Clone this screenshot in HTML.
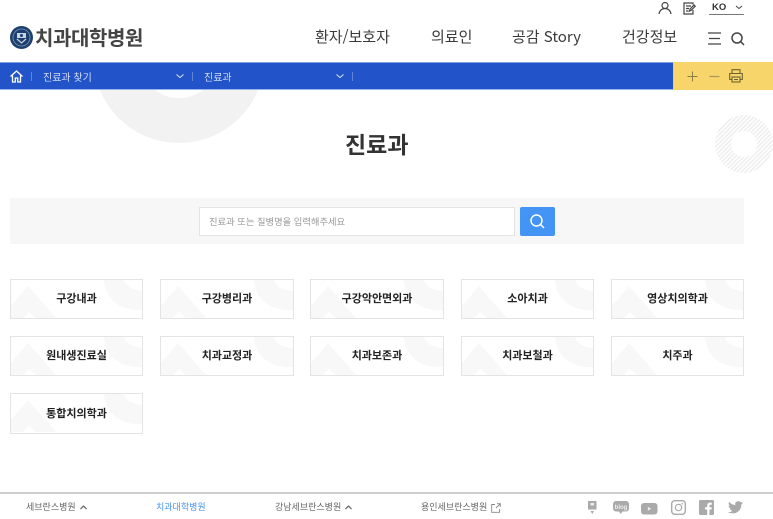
<!DOCTYPE html>
<html lang="ko"><head><meta charset="utf-8"><title>진료과</title>
<style>
*{margin:0;padding:0;box-sizing:border-box}
html,body{width:773px;height:519px;overflow:hidden;background:#fff}
body{position:relative;font-family:"Noto Sans CJK KR","Liberation Sans",sans-serif;color:#333}
.a{position:absolute;white-space:nowrap;line-height:1}
svg{position:absolute;overflow:visible}
.nav{font-size:15px;color:#3a3a3a;top:29px}
.card{position:absolute;width:133px;height:40px;border:1px solid #e4e4e4;background:#fff;overflow:hidden;text-align:center;line-height:37px;font-size:11px;font-weight:bold;color:#222}
.card svg{left:0;top:0}
.card span{position:relative}
.ft{font-size:9px;color:#666;top:502px}
</style></head><body>

<!-- background shapes -->
<svg style="left:0;top:90px;overflow:hidden" width="773" height="60">
<path fill-rule="evenodd" fill="#f2f2f2" d="M93.500 -32.500a85.500 85.500 0 1 0 171 0a85.500 85.500 0 1 0-171 0zM138.500 -32.500a40.500 40.500 0 1 1 81 0a40.500 40.500 0 1 1-81 0z"/>
</svg>
<svg style="left:0;top:0" width="773" height="519"><defs><pattern id="st" width="3" height="3" patternUnits="userSpaceOnUse" patternTransform="rotate(-45)"><rect width="3" height="1.500" fill="#eeeeee"/></pattern></defs>
<path fill-rule="evenodd" fill="url(#st)" d="M715 144a29 29 0 1 0 58 0a29 29 0 1 0-58 0zM731 144a13 13 0 1 1 26 0a13 13 0 1 1-26 0z"/>
</svg>

<!-- top utility -->
<svg style="left:658px;top:1px" width="14" height="14" fill="none" stroke="#444" stroke-width="1.200"><circle cx="7" cy="4.500" r="3"/><path d="M1 13c.5-3.500 3-5.500 6-5.500s5.500 2 6 5.500"/></svg>
<svg style="left:683px;top:2px" width="13" height="13" fill="none" stroke="#444" stroke-width="1.200"><path d="M10 8v4H1V1h9v1.500M3 4h5M3 6.500h3M3 9h2.500M6.500 9l.5-2 4-4 1.200 1.200-4 4z"/></svg>
<div class="a" style="left:712px;top:3px;font-size:9.500px;font-weight:bold;color:#333;font-family:'Liberation Sans',sans-serif">KO</div>
<svg style="left:735px;top:5px" width="8" height="5" fill="none" stroke="#444" stroke-width="1"><path d="M1 1l3 2.500L7 1"/></svg>
<div class="a" style="left:709px;top:14px;width:35px;height:1px;background:#777"></div>

<!-- logo -->
<svg style="left:10px;top:26px" width="24" height="24"><circle cx="11.500" cy="11.500" r="11.500" fill="#1d3f6e"/><circle cx="11.500" cy="11.500" r="8.500" fill="none" stroke="#7f97b8" stroke-width=".8"/><rect x="7" y="7" width="9" height="5" fill="#c9d4e3"/><path d="M7 13l4.500 4 4.500-4" fill="none" stroke="#c9d4e3" stroke-width="1.200"/><circle cx="11.500" cy="9.500" r="1.500" fill="#1d3f6e"/></svg>
<div class="a" style="left:35px;top:27px;font-size:20px;font-weight:bold;color:#444;letter-spacing:-.4px">치과대학병원</div>

<!-- nav -->
<div class="a nav" style="left:315px">환자/보호자</div>
<div class="a nav" style="left:431px">의료인</div>
<div class="a nav" style="left:512px">공감 Story</div>
<div class="a nav" style="left:622px">건강정보</div>
<svg style="left:707px;top:32px" width="14" height="13" stroke="#444" stroke-width="1.300"><path d="M1 1h13M2 6.500h11M1 12h13"/></svg>
<svg style="left:731px;top:32px" width="14" height="14" fill="none" stroke="#444" stroke-width="1.500"><circle cx="6" cy="6" r="5"/><path d="M9.500 9.500L13 13"/></svg>

<!-- bar -->
<div class="a" style="left:0;top:62px;width:673px;height:28px;background:#2253c8;border-top:1px solid #7f9fe4;border-bottom:1px solid #9ab3ea"></div>
<div class="a" style="left:673px;top:62px;width:100px;height:28px;background:#f7d56b;border-left:1px solid #cfd3c0"></div>
<svg style="left:10px;top:70px" width="14" height="13" fill="none" stroke="#fff" stroke-width="1.300"><path d="M.5 6.500L6.500 1l6 5.500M2.500 5.500V12h2.800V8h2.400v4h2.800V5.500"/></svg>
<div class="a" style="left:31px;top:72px;width:1px;height:9px;background:#5f83d8"></div>
<div class="a" style="left:43px;top:72px;font-size:10px;color:#d3def6">진료과 찾기</div>
<svg style="left:176px;top:74px" width="8" height="5" fill="none" stroke="#dce5f8" stroke-width="1"><path d="M.5.500l3.500 3 3.500-3"/></svg>
<div class="a" style="left:192px;top:72px;width:1px;height:9px;background:#5f83d8"></div>
<div class="a" style="left:204px;top:72px;font-size:10px;color:#d3def6">진료과</div>
<svg style="left:336px;top:74px" width="8" height="5" fill="none" stroke="#dce5f8" stroke-width="1"><path d="M.5.500l3.500 3 3.500-3"/></svg>
<div class="a" style="left:352px;top:72px;width:1px;height:9px;background:#5f83d8"></div>
<svg style="left:687px;top:71px" width="11" height="11" stroke="#8c7c44" stroke-width="1"><path d="M.5 5.500h10M5.500.5v10"/></svg>
<svg style="left:709px;top:71px" width="11" height="11" stroke="#a8975a" stroke-width="1.200"><path d="M.5 5.500h10"/></svg>
<svg style="left:729px;top:69px" width="14" height="14" fill="none" stroke="#6f6433" stroke-width="1.100"><path d="M3 4.500V.7h8v3.800M3 10.500H.7V4.500h12.600v6H11"/><rect x="3" y="8" width="8" height="5"/><path d="M5 10.500h4"/></svg>

<!-- title -->
<div class="a" style="left:345px;top:132px;font-size:23px;font-weight:bold;color:#333">진료과</div>

<!-- search -->
<div class="a" style="left:10px;top:198px;width:734px;height:46px;background:#f7f7f7"></div>
<div class="a" style="left:199px;top:207px;width:316px;height:29px;background:#fff;border:1px solid #e4e4e4"></div>
<div class="a" style="left:209px;top:217px;font-size:9.300px;color:#999">진료과 또는 질병명을 입력해주세요</div>
<div class="a" style="left:520px;top:207px;width:35px;height:29px;background:#4394f5;border-radius:2px"></div>
<svg style="left:530px;top:214px" width="15" height="15" fill="none" stroke="#fff" stroke-width="1.500"><circle cx="6.500" cy="6.500" r="5.500"/><path d="M10.500 10.500L14 14"/></svg>

<!-- cards -->
<div class="card" style="left:10px;top:279px"><svg width="133" height="40"><path fill="#f8f8f8" d="M0 26L17 6l28 32H25l-7-6-6 6H0z"/><path fill="#f8f8f8" d="M93 0h40v30c-22 2-39-10-40-30z"/><path fill="#fff" d="M113 0h20v11c-10 0-18-4-20-11z"/></svg><span>구강내과</span></div>
<div class="card" style="left:160px;top:279px;width:134px"><svg width="133" height="40"><path fill="#f8f8f8" d="M0 26L17 6l28 32H25l-7-6-6 6H0z"/><path fill="#f8f8f8" d="M93 0h40v30c-22 2-39-10-40-30z"/><path fill="#fff" d="M113 0h20v11c-10 0-18-4-20-11z"/></svg><span>구강병리과</span></div>
<div class="card" style="left:310px;top:279px;width:134px"><svg width="133" height="40"><path fill="#f8f8f8" d="M0 26L17 6l28 32H25l-7-6-6 6H0z"/><path fill="#f8f8f8" d="M93 0h40v30c-22 2-39-10-40-30z"/><path fill="#fff" d="M113 0h20v11c-10 0-18-4-20-11z"/></svg><span>구강악안면외과</span></div>
<div class="card" style="left:461px;top:279px"><svg width="133" height="40"><path fill="#f8f8f8" d="M0 26L17 6l28 32H25l-7-6-6 6H0z"/><path fill="#f8f8f8" d="M93 0h40v30c-22 2-39-10-40-30z"/><path fill="#fff" d="M113 0h20v11c-10 0-18-4-20-11z"/></svg><span>소아치과</span></div>
<div class="card" style="left:611px;top:279px"><svg width="133" height="40"><path fill="#f8f8f8" d="M0 26L17 6l28 32H25l-7-6-6 6H0z"/><path fill="#f8f8f8" d="M93 0h40v30c-22 2-39-10-40-30z"/><path fill="#fff" d="M113 0h20v11c-10 0-18-4-20-11z"/></svg><span>영상치의학과</span></div>
<div class="card" style="left:10px;top:336px"><svg width="133" height="40"><path fill="#f8f8f8" d="M0 26L17 6l28 32H25l-7-6-6 6H0z"/><path fill="#f8f8f8" d="M93 0h40v30c-22 2-39-10-40-30z"/><path fill="#fff" d="M113 0h20v11c-10 0-18-4-20-11z"/></svg><span>원내생진료실</span></div>
<div class="card" style="left:160px;top:336px;width:134px"><svg width="133" height="40"><path fill="#f8f8f8" d="M0 26L17 6l28 32H25l-7-6-6 6H0z"/><path fill="#f8f8f8" d="M93 0h40v30c-22 2-39-10-40-30z"/><path fill="#fff" d="M113 0h20v11c-10 0-18-4-20-11z"/></svg><span>치과교정과</span></div>
<div class="card" style="left:310px;top:336px;width:134px"><svg width="133" height="40"><path fill="#f8f8f8" d="M0 26L17 6l28 32H25l-7-6-6 6H0z"/><path fill="#f8f8f8" d="M93 0h40v30c-22 2-39-10-40-30z"/><path fill="#fff" d="M113 0h20v11c-10 0-18-4-20-11z"/></svg><span>치과보존과</span></div>
<div class="card" style="left:461px;top:336px"><svg width="133" height="40"><path fill="#f8f8f8" d="M0 26L17 6l28 32H25l-7-6-6 6H0z"/><path fill="#f8f8f8" d="M93 0h40v30c-22 2-39-10-40-30z"/><path fill="#fff" d="M113 0h20v11c-10 0-18-4-20-11z"/></svg><span>치과보철과</span></div>
<div class="card" style="left:611px;top:336px"><svg width="133" height="40"><path fill="#f8f8f8" d="M0 26L17 6l28 32H25l-7-6-6 6H0z"/><path fill="#f8f8f8" d="M93 0h40v30c-22 2-39-10-40-30z"/><path fill="#fff" d="M113 0h20v11c-10 0-18-4-20-11z"/></svg><span>치주과</span></div>
<div class="card" style="left:10px;top:393px;height:41px;line-height:39px"><svg width="133" height="40"><path fill="#f8f8f8" d="M0 26L17 6l28 32H25l-7-6-6 6H0z"/><path fill="#f8f8f8" d="M93 0h40v30c-22 2-39-10-40-30z"/><path fill="#fff" d="M113 0h20v11c-10 0-18-4-20-11z"/></svg><span>통합치의학과</span></div>

<!-- footer -->
<div class="a" style="left:0;top:492px;width:773px;height:2px;background:#cfcfcf"></div>
<div class="a ft" style="left:26px">세브란스병원</div>
<svg style="left:80px;top:505px" width="7" height="5" fill="none" stroke="#555" stroke-width="1.100"><path d="M.5 4L3.500 1l3 3"/></svg>
<div class="a ft" style="left:156px;color:#4a94ea">치과대학병원</div>
<div class="a ft" style="left:275px">강남세브란스병원</div>
<svg style="left:345px;top:505px" width="7" height="5" fill="none" stroke="#555" stroke-width="1.100"><path d="M.5 4L3.500 1l3 3"/></svg>
<div class="a ft" style="left:421px">용인세브란스병원</div>
<svg style="left:491px;top:503px" width="10" height="10" fill="none" stroke="#888" stroke-width=".9"><path d="M4 1.500H.7v7.800h7.800V6M5 5l4-4M6 .7h3.300V4"/></svg>

<svg style="left:588px;top:501px" width="9" height="14" fill="#aaa"><path d="M0 0h8.500v8.500H0zM2.500 10h3.500l-1.700 3z"/><rect x="2.500" y="2" width="3.500" height="2.500" fill="#eee"/></svg>
<svg style="left:613px;top:501px" width="16" height="14"><rect width="16" height="10.500" rx="3" fill="#aaa"/><path d="M6 10.500h3.500l-1.800 2.500z" fill="#aaa"/><text x="8" y="7.800" text-anchor="middle" font-family="Liberation Sans,sans-serif" font-size="6" font-weight="bold" fill="#eee">blog</text></svg>
<svg style="left:641px;top:503px" width="17" height="12"><rect width="16.500" height="11.500" rx="3" fill="#aaa"/><path d="M6.800 3.700l3.500 2-3.500 2z" fill="#eee"/></svg>
<svg style="left:671px;top:500px" width="15" height="15" fill="none" stroke="#aaa"><rect x=".7" y=".7" width="13.600" height="13.600" rx="3" stroke-width="1.400"/><circle cx="7.500" cy="7.500" r="3.200" stroke-width="1.200"/><circle cx="11.300" cy="3.700" r=".8" fill="#aaa" stroke="none"/></svg>
<svg style="left:699px;top:500px" width="15" height="15"><rect width="15" height="15" rx="1.500" fill="#aaa"/><path d="M10.500 15V9.500h2l.3-2.300h-2.300V5.800c0-.7.300-1.100 1.100-1.100h1.200v-2c-.3 0-1-.1-1.700-.1-1.900 0-2.900 1.100-2.900 3v1.600H6v2.300h2.200V15z" fill="#fff"/></svg>
<svg style="left:728px;top:501px" width="15" height="13"><path fill="#aaa" d="M15 1.800c-.6.200-1.200.4-1.800.5.600-.4 1.100-1 1.300-1.800-.6.400-1.200.6-1.900.8A3 3 0 0 0 7.400 4.100C4.900 4 2.700 2.800 1.100.9c-.8 1.400-.4 3.100.9 4-.5 0-1-.1-1.400-.4 0 1.500 1 2.800 2.500 3.100-.5.100-.9.100-1.400 0 .4 1.200 1.500 2.100 2.900 2.100A6.100 6.100 0 0 1 0 11c1.400.9 3 1.400 4.700 1.400 5.700 0 8.900-4.800 8.700-9.100.6-.4 1.200-.9 1.600-1.500z"/></svg>
</body></html>
